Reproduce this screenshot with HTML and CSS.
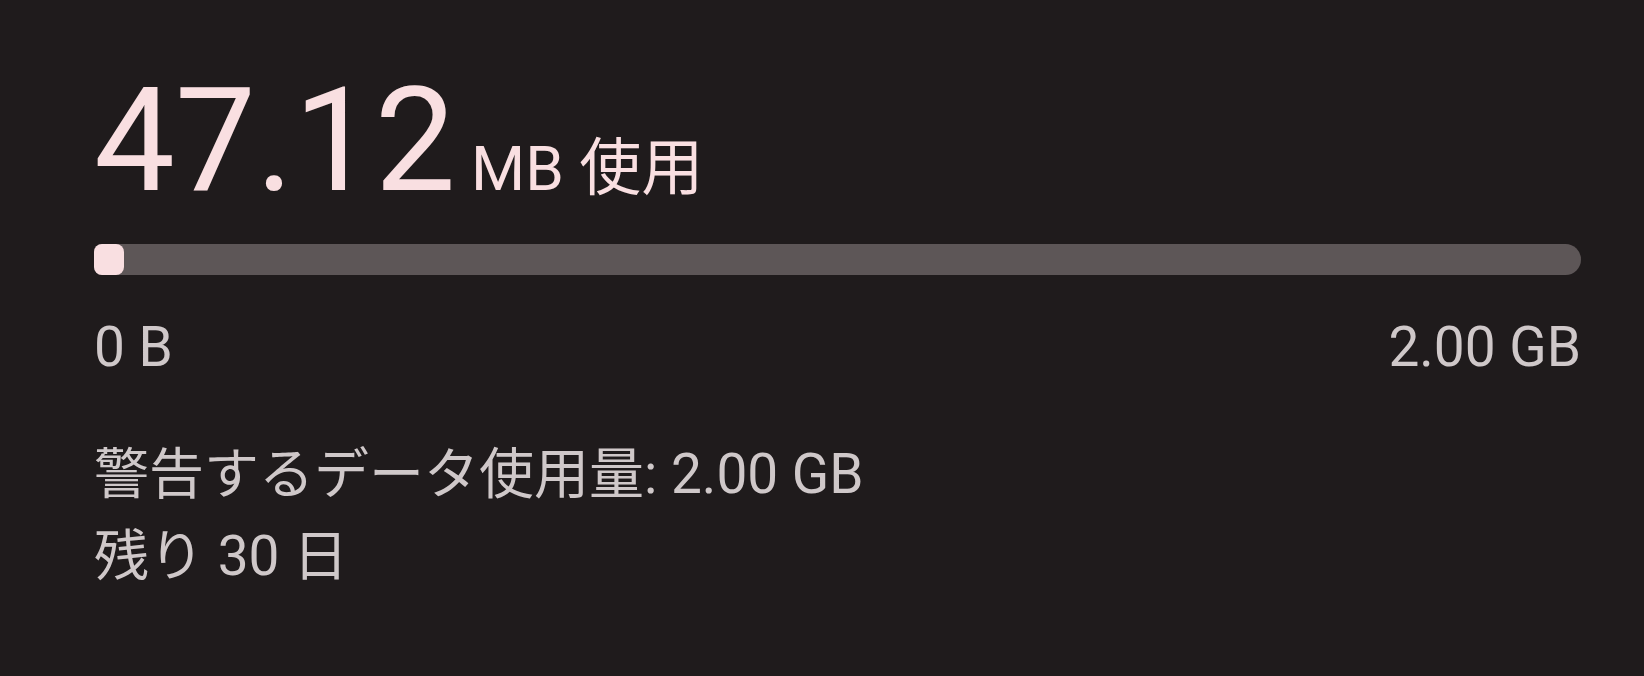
FILE: index.html
```html
<!DOCTYPE html>
<html lang="ja">
<head>
    <meta charset="UTF-8">
    <meta name="viewport" content="width=device-width, initial-scale=1.0">
    <title>データ使用量</title>
    <link rel="stylesheet" href="styles.css">
</head>
<body>
    <div class="usage">
        <div class="usage-total">
            <span class="usage-value">47.12</span><span class="usage-unit"> MB 使用</span>
        </div>

        <div class="usage-bar">
            <div class="usage-fill" style="width: 2%"></div>
        </div>

        <div class="usage-range">
            <span>0 B</span>
            <span>2.00 GB</span>
        </div>

        <div class="usage-info">
            <div>警告するデータ使用量: 2.00 GB</div>
            <div>残り 30 日</div>
        </div>
    </div>
</body>
</html>
```

FILE: styles.css
```css
body {
    margin: 0;
    background-color: #1f1b1c;
    font-family: Roboto, "Noto Sans CJK JP", sans-serif;
}

.usage {
    padding: 67px 63px 0 94px;
}

.usage-total {
    color: #f9dfe1;
    font-size: 144px;
    line-height: 148px;
    white-space: nowrap;
}

.usage-unit {
    font-size: 62px;
    line-height: 62px;
}

.usage-bar {
    margin-top: 29px;
    height: 31px;
    background-color: #5d5657;
    border-radius: 8px 16px 16px 8px;
}

.usage-fill {
    height: 100%;
    min-width: 30px;
    background-color: #f9dfe1;
    border-radius: 8px;
}

.usage-range {
    display: flex;
    justify-content: space-between;
    margin-top: 40px;
    font-size: 55px;
    line-height: 64px;
    color: #cfc8c9;
}

.usage-info {
    margin-top: 54px;
    font-size: 55px;
    line-height: 82px;
    color: #cfc8c9;
}
```
